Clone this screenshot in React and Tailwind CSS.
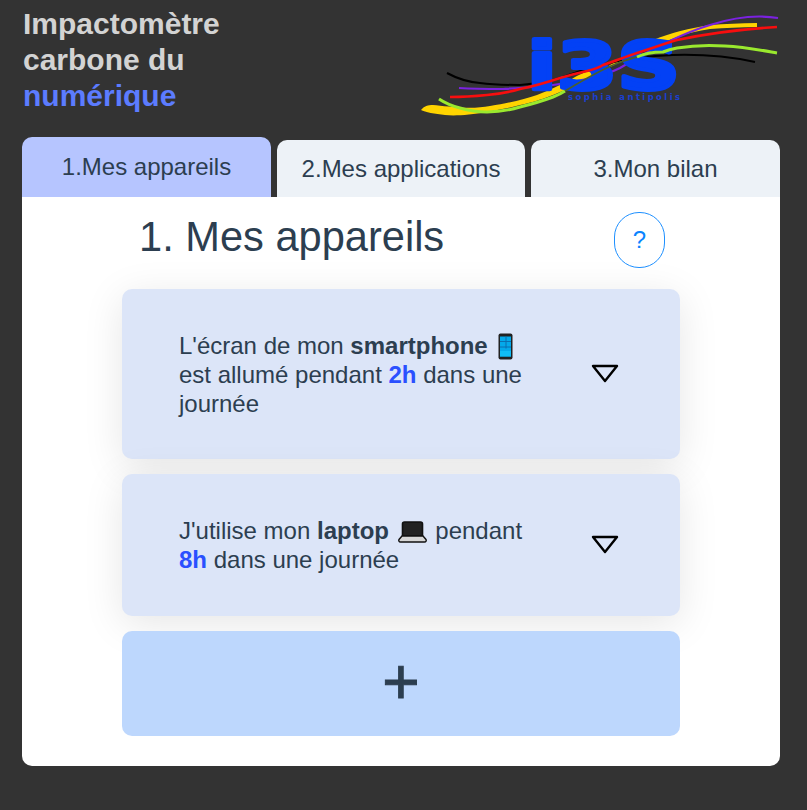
import React from 'react';

function Logo() {
  return (
    <svg width="360" height="110" viewBox="420 10 360 110" className="mt-[10px] block">
      {/* ribbons behind the letters */}
      <path d="M421 110C424 106 428 105 433 105C445 106 470 110 490 106C510 103 525 99 537 95C550 90 560 85 570 80C578 75 586 71 592 71C596 71 597 73 595 75C592 78 589 78 587 79C577 85 565 90 553 95C540 100 530 103 520 105C510 108 498 110 487 112C470 115 455 116 445 115C435 114 425 112 421 110Z" fill="#ffd400" />
      <path d="M600 72C620 58 640 46 653 40C670 33 690 28 710 25C725 24 740 23 757 23L757 27C740 27 725 28 710 29C698 31 688 33 677 37C650 47 625 60 600 72Z" fill="#ffd400" />
      <path d="M447 73C458 79 468 82 480 83C495 85 510 85 520 85C532 84 543 82 553 80C575 73 590 67 610 63C640 55 700 50 755 62" fill="none" stroke="#000" strokeWidth="2" />
      <path d="M459 88C475 89 490 89 503 89C520 88 538 87 553 85C575 82 600 78 620 68C650 50 680 34 710 25C735 17 760 15 778 18" fill="none" stroke="#7b22e0" strokeWidth="2.2" />

      <text x="527" y="89" fontFamily="'DejaVu Sans', sans-serif" fontWeight="700" fontSize="66" fill="#0341f5" stroke="#0341f5" strokeWidth="4" strokeLinejoin="round" textLength="153" lengthAdjust="spacingAndGlyphs">i3S</text>

      {/* these two stay on top of the letters */}
      <path d="M450 97C465 97 477 96 487 95C500 94 510 92 520 89C535 86 548 82 560 78C570 75 578 73 587 71C595 69 600 67 603 65C615 61 625 57 637 53C650 49 663 44 677 40C710 33 745 29 777 27" fill="none" stroke="#f80e0e" strokeWidth="2.6" />
      <path d="M439 99C445 103 452 106 460 108C470 111 478 112 487 112C500 112 510 110 520 107C532 104 545 100 553 97C558 95 562 93 565 91" fill="none" stroke="#9ae92e" strokeWidth="3" />
      <path d="M565 91C580 82 600 70 618 63C626 60 632 58 637 57" fill="none" stroke="#4a5f2c" strokeWidth="1.8" />
      <path d="M637 57C645 53 655 52 663 52C668 50 672 49 677 48C695 45 710 45 725 46C745 47 760 50 777 53" fill="none" stroke="#9ae92e" strokeWidth="3" />

      <text x="568" y="100" fontFamily="'DejaVu Sans', sans-serif" fontWeight="700" fontSize="8.500" fill="#1a3fd0" textLength="112" lengthAdjust="spacing">sophia antipolis</text>
    </svg>
  );
}

function PhoneEmoji() {
  return (
    <svg width="15" height="27" viewBox="0 0 15 27" className="mx-[4px] inline-block align-[-6px]">
      <rect x="0.5" y="0.5" width="14" height="26" rx="2" fill="#222" />
      <rect x="2" y="3.5" width="11" height="20" fill="#04a9ea" />
      <path d="M2 8.5h11M2 14h11M8 3.5v12" stroke="#0b6fb0" strokeWidth="1" />
      <rect x="2" y="18" width="11" height="5.5" fill="#10bdf5" />
    </svg>
  );
}

function LaptopEmoji() {
  return (
    <svg width="29" height="22" viewBox="0 0 29 22" className="mx-[2px] inline-block align-[-4px]">
      <path d="M4.5 15V3a2 2 0 0 1 2-2h16a2 2 0 0 1 2 2v12z" fill="#222" stroke="#111" strokeWidth="1.6" />
      <path d="M4 15h21l3 3.500c.6 1 0 2.500-1.500 2.500h-24C1 21 .4 19.500 1 18.500z" fill="#d6d6d6" stroke="#111" strokeWidth="1.4" />
    </svg>
  );
}

function Chevron() {
  return (
    <svg width="28" height="19" viewBox="0 0 28 19" className="mt-[-2px] shrink-0">
      <path d="M2 2h24L14 17z" fill="none" stroke="#000" strokeWidth="2.4" strokeLinejoin="round" />
    </svg>
  );
}

function DeviceCard({ children, className }) {
  return (
    <div className={`flex items-center justify-between rounded-[10px] bg-[#dce5f8] pl-[57px] pr-[61px] shadow-[0_8px_40px_rgba(0,0,0,0.1)] ${className}`}>
      <p className="w-[350px] text-[24px] leading-[29px]">{children}</p>
      <Chevron />
    </div>
  );
}

export default function App() {
  return (
    <div className="min-h-[810px] bg-[#333333] pl-[22px] pr-[27px] font-['Liberation_Sans',sans-serif] text-[#2c3e50]">
      <header className="flex h-[137px] justify-between">
        <h1 className="pt-[6px] pl-px text-[30px] font-bold leading-[36px] text-[#d3d3d3]">
          Impactomètre<br />carbone du<br /><span className="text-[#5c7cff]">numérique</span>
        </h1>
        <Logo />
      </header>

      <nav className="flex items-end gap-[6px] text-[24px]">
        <div className="flex h-[60px] w-[249px] items-center justify-center rounded-t-[10px] bg-[#b6c5ff]">1.Mes appareils</div>
        <div className="flex h-[57px] w-[248px] items-center justify-center rounded-t-[10px] bg-[#edf2f7]">2.Mes applications</div>
        <div className="flex h-[57px] w-[249px] items-center justify-center rounded-t-[10px] bg-[#edf2f7]">3.Mon bilan</div>
      </nav>

      <main className="flex h-[569px] flex-col items-center rounded-b-[10px] bg-white">
        <div className="flex h-[92px] w-[558px] items-start justify-between pl-[17px] pr-[15px]">
          <h2 className="pt-[17px] text-[41.600px] leading-[46px]">1. Mes appareils</h2>
          <button className="mt-[15px] h-[56px] w-[51px] rounded-[25px] border border-[#1e90ff] text-[24px] text-[#0a84ff]">?</button>
        </div>
        <div className="flex w-[558px] flex-col gap-[15px]">
          <DeviceCard className="h-[170px]">
            L'écran de mon <b>smartphone</b> <PhoneEmoji /><br />
            est allumé pendant <b className="text-[#2a50ff]">2h</b> dans une<br />
            journée
          </DeviceCard>
          <DeviceCard className="h-[142px]">
            J'utilise mon <b>laptop</b> <LaptopEmoji /> pendant<br />
            <b className="text-[#2a50ff]">8h</b> dans une journée
          </DeviceCard>
          <button className="flex h-[105px] items-center justify-center rounded-[10px] bg-[#bdd7fd] pb-[3px] text-[64px] leading-none [-webkit-text-stroke:1px_#2c3e50]">+</button>
        </div>
      </main>
    </div>
  );
}
